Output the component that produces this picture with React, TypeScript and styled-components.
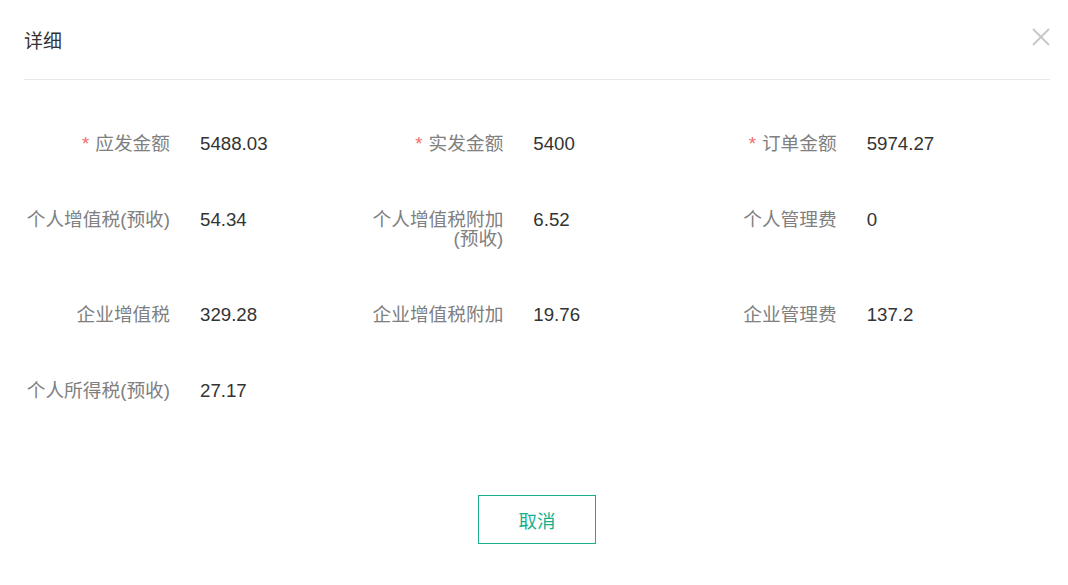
import React from 'react';
import styled, { createGlobalStyle } from 'styled-components';

const Global = createGlobalStyle`
  html, body { margin: 0; padding: 0; background: #fff; }
  body { font-family: "Liberation Sans", Arial, "Noto Sans CJK SC", sans-serif; }
`;

const Dialog = styled.div`
  width: 1068px;
  height: 585px;
  padding: 0 18px 0 24px;
  box-sizing: border-box;
  background: #fff;
`;

const Header = styled.div`
  display: flex;
  align-items: center;
  justify-content: space-between;
  height: 80px;
  border-bottom: 1px solid #e8e8e8;
  box-sizing: border-box;
`;

const Title = styled.span`
  font-size: 19px;
  color: #333;
`;

const Close = styled.button`
  border: 0;
  background: none;
  padding: 0;
  margin: 0 0 6px;
  width: 18px;
  height: 18px;
  display: flex;
  cursor: pointer;
`;

const Form = styled.div`
  display: grid;
  grid-template-columns: repeat(3, 333.33px);
  row-gap: 57px;
  padding-top: 54px;
  width: 1000px;
`;

const Item = styled.div`
  display: flex;
  gap: 30px;
  font-size: 18.7px;
  line-height: 19px;
`;

const Label = styled.div`
  width: 146px;
  flex: none;
  text-align: right;
  color: #808080;
  line-break: strict;
`;

const Star = styled.span`
  color: #f56c6c;
  margin-right: 6px;
`;

const Value = styled.div`
  color: #333;
`;

const Footer = styled.div`
  display: flex;
  justify-content: center;
  padding-top: 95px;
`;

const CancelButton = styled.button`
  width: 118px;
  height: 49px;
  border: 1px solid #16b08e;
  background: #fff;
  color: #16b08e;
  font-size: 18.5px;
  font-family: inherit;
  cursor: pointer;
`;

type Field = { label: string; value: string; required?: boolean };

const fields: Field[] = [
  { label: '应发金额', value: '5488.03', required: true },
  { label: '实发金额', value: '5400', required: true },
  { label: '订单金额', value: '5974.27', required: true },
  { label: '个人增值税(预收)', value: '54.34' },
  { label: '个人增值税附加(预收)', value: '6.52' },
  { label: '个人管理费', value: '0' },
  { label: '企业增值税', value: '329.28' },
  { label: '企业增值税附加', value: '19.76' },
  { label: '企业管理费', value: '137.2' },
  { label: '个人所得税(预收)', value: '27.17' },
];

export default function App() {
  return (
    <>
      <Global />
      <Dialog>
        <Header>
          <Title>详细</Title>
          <Close aria-label="关闭">
            <svg width="18" height="18" viewBox="0 0 18 18">
              <path d="M1 1L17 17M17 1L1 17" stroke="#c6c6c6" strokeWidth="1.8" fill="none" />
            </svg>
          </Close>
        </Header>
        <Form>
          {fields.map((f) => (
            <Item key={f.label}>
              <Label>
                {f.required && <Star>*</Star>}
                {f.label}
              </Label>
              <Value>{f.value}</Value>
            </Item>
          ))}
        </Form>
        <Footer>
          <CancelButton>取消</CancelButton>
        </Footer>
      </Dialog>
    </>
  );
}
